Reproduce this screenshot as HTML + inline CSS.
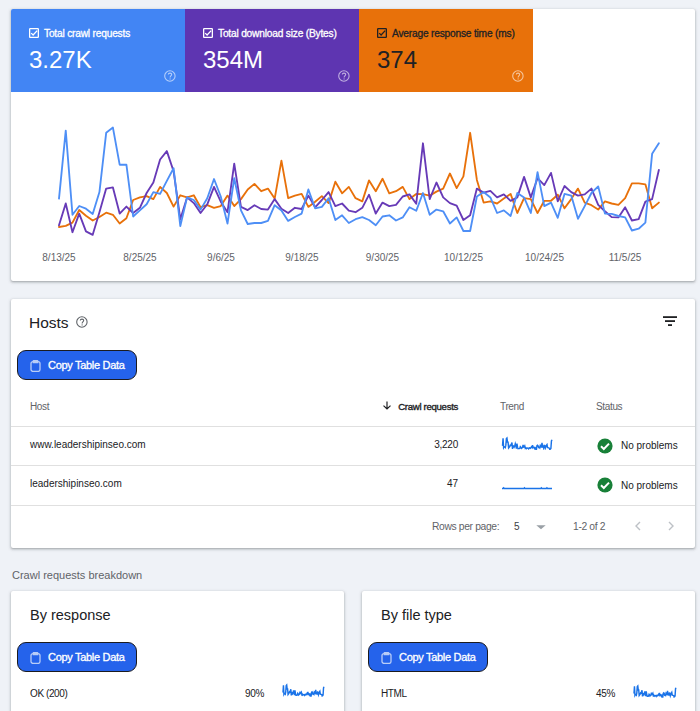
<!DOCTYPE html>
<html><head><meta charset="utf-8"><style>
*{box-sizing:border-box;margin:0;padding:0}
html,body{width:700px;height:711px;overflow:hidden;background:#eff2f7;font-family:"Liberation Sans",sans-serif;color:#202124}
.card{position:absolute;background:#fff;border-radius:2px;box-shadow:0 1px 2px 0 rgba(60,64,67,.3),0 1px 3px 1px rgba(60,64,67,.15);overflow:hidden}
.t{position:absolute;white-space:nowrap;line-height:1}
.tile{position:absolute;top:0;height:83px;width:174px}
.tlabel{position:absolute;left:33px;top:20px;font-size:10.2px;-webkit-text-stroke:0.3px currentColor;letter-spacing:-0.2px;white-space:nowrap;line-height:1}
.tval{position:absolute;left:18px;top:39px;font-size:24px;white-space:nowrap;line-height:1}
.btn{position:absolute;width:120px;height:30px;background:#2563eb;border:1px solid #1b1b1f;border-radius:9px;overflow:hidden}
.btxt{position:absolute;left:30px;top:9px;font-size:11px;-webkit-text-stroke:0.3px #fff;letter-spacing:-0.3px;color:#fff;white-space:nowrap;line-height:1}
.hdr{font-size:10px;letter-spacing:-0.35px;color:#5f6368}
.cell{font-size:10px;color:#202124}
.div{position:absolute;left:0;right:0;height:1px;background:#e0e0e0}
</style></head><body>

<div class="card" style="left:11px;top:9px;width:684px;height:272px">
  <div class="tile" style="left:0;background:#4285f4;color:#fff">
    <svg style="position:absolute;left:18px;top:19px" width="10" height="10" viewBox="0 0 10 10"><rect x="0.65" y="0.65" width="8.7" height="8.7" rx="0.6" fill="none" stroke="#fff" stroke-width="1.3"/><path d="M2.2,5.1 L4.1,7 L8.2,2.6" fill="none" stroke="#fff" stroke-width="1.3"/></svg>
    <span class="tlabel">Total crawl requests</span>
    <span class="tval">3.27K</span>
    <svg style="position:absolute;left:152px;top:60px" width="14" height="14" viewBox="0 0 14 14"><circle cx="6.9" cy="7" r="5.2" fill="none" stroke="#fff" stroke-width="1.1" opacity="0.6"/><path d="M5.3,5.6 C5.3,4.6 6.1,4.1 7,4.1 C7.9,4.1 8.7,4.7 8.7,5.5 C8.7,6.6 7.1,6.8 7.1,8.6" fill="none" stroke="#fff" stroke-width="1.1" opacity="0.6"/><circle cx="7.1" cy="9.9" r="0.6" fill="#fff" opacity="0.6"/></svg>
  </div>
  <div class="tile" style="left:174px;background:#5e35b1;color:#fff">
    <svg style="position:absolute;left:18px;top:19px" width="10" height="10" viewBox="0 0 10 10"><rect x="0.65" y="0.65" width="8.7" height="8.7" rx="0.6" fill="none" stroke="#fff" stroke-width="1.3"/><path d="M2.2,5.1 L4.1,7 L8.2,2.6" fill="none" stroke="#fff" stroke-width="1.3"/></svg>
    <span class="tlabel">Total download size (Bytes)</span>
    <span class="tval">354M</span>
    <svg style="position:absolute;left:152px;top:60px" width="14" height="14" viewBox="0 0 14 14"><circle cx="6.9" cy="7" r="5.2" fill="none" stroke="#fff" stroke-width="1.1" opacity="0.6"/><path d="M5.3,5.6 C5.3,4.6 6.1,4.1 7,4.1 C7.9,4.1 8.7,4.7 8.7,5.5 C8.7,6.6 7.1,6.8 7.1,8.6" fill="none" stroke="#fff" stroke-width="1.1" opacity="0.6"/><circle cx="7.1" cy="9.9" r="0.6" fill="#fff" opacity="0.6"/></svg>
  </div>
  <div class="tile" style="left:348px;background:#e8710a;color:#202124">
    <svg style="position:absolute;left:18px;top:19px" width="10" height="10" viewBox="0 0 10 10"><rect x="0.65" y="0.65" width="8.7" height="8.7" rx="0.6" fill="none" stroke="#202124" stroke-width="1.3"/><path d="M2.2,5.1 L4.1,7 L8.2,2.6" fill="none" stroke="#202124" stroke-width="1.3"/></svg>
    <span class="tlabel">Average response time (ms)</span>
    <span class="tval">374</span>
    <svg style="position:absolute;left:152px;top:60px" width="14" height="14" viewBox="0 0 14 14"><circle cx="6.9" cy="7" r="5.2" fill="none" stroke="#fff" stroke-width="1.1" opacity="0.6"/><path d="M5.3,5.6 C5.3,4.6 6.1,4.1 7,4.1 C7.9,4.1 8.7,4.7 8.7,5.5 C8.7,6.6 7.1,6.8 7.1,8.6" fill="none" stroke="#fff" stroke-width="1.1" opacity="0.6"/><circle cx="7.1" cy="9.9" r="0.6" fill="#fff" opacity="0.6"/></svg>
  </div>
</div>

<svg style="position:absolute;left:0;top:0" width="700" height="290" viewBox="0 0 700 290">
  <g fill="none" stroke-width="1.85" stroke-linejoin="round" stroke-linecap="round">
    <path d="M59.00,227.0 L65.74,225.8 L72.48,222.6 L79.22,210.0 L85.96,215.7 L92.70,220.5 L99.44,217.0 L106.18,212.7 L112.92,214.8 L119.66,223.5 L126.40,218.3 L133.14,200.0 L139.88,197.4 L146.62,196.1 L153.36,199.1 L160.10,186.9 L166.84,193.0 L173.58,206.6 L180.32,195.3 L187.06,197.4 L193.80,195.3 L200.54,207.2 L207.28,205.2 L214.02,207.8 L220.76,206.1 L227.50,195.6 L234.24,206.1 L240.98,199.1 L247.72,189.5 L254.46,183.9 L261.20,191.2 L267.94,188.6 L274.68,198.6 L281.42,160.7 L288.16,198.2 L294.90,195.6 L301.64,193.9 L308.38,206.9 L315.12,201.7 L321.86,196.1 L328.60,203.1 L335.34,181.7 L342.08,193.3 L348.82,186.9 L355.56,198.2 L362.30,201.4 L369.04,180.4 L375.78,191.2 L382.52,178.7 L389.26,193.3 L396.00,191.2 L402.74,186.9 L409.48,199.1 L416.22,193.9 L422.96,194.1 L429.70,195.6 L436.44,191.6 L443.18,188.6 L449.92,173.5 L456.66,188.1 L463.40,176.4 L470.14,132.8 L476.88,179.9 L483.62,202.6 L490.36,201.4 L497.10,203.5 L503.84,198.6 L510.58,193.9 L517.32,213.0 L524.06,198.2 L530.80,199.1 L537.54,213.0 L544.28,200.8 L551.02,200.8 L557.76,194.7 L564.50,208.3 L571.24,199.1 L577.98,188.6 L584.72,202.6 L591.46,205.2 L598.20,209.6 L604.94,201.4 L611.68,203.5 L618.42,204.8 L625.16,198.2 L631.90,183.4 L638.64,183.4 L645.38,184.3 L652.12,208.3 L658.86,202.6" stroke="#e8710a"/>
    <path d="M59.00,225.3 L65.74,203.5 L72.48,232.2 L79.22,213.6 L85.96,231.4 L92.70,234.8 L99.44,212.2 L106.18,188.6 L112.92,187.4 L119.66,213.6 L126.40,206.6 L133.14,213.0 L139.88,207.8 L146.62,193.0 L153.36,182.5 L160.10,159.5 L166.84,151.1 L173.58,171.2 L180.32,219.2 L187.06,197.4 L193.80,203.1 L200.54,213.0 L207.28,204.3 L214.02,186.9 L220.76,201.7 L227.50,212.2 L234.24,163.7 L240.98,206.9 L247.72,210.1 L254.46,205.2 L261.20,209.0 L267.94,209.6 L274.68,199.1 L281.42,208.7 L288.16,213.0 L294.90,207.8 L301.64,209.0 L308.38,195.6 L315.12,207.3 L321.86,200.0 L328.60,192.1 L335.34,206.1 L342.08,203.5 L348.82,210.6 L355.56,212.2 L362.30,207.8 L369.04,194.7 L375.78,213.6 L382.52,202.6 L389.26,206.1 L396.00,204.8 L402.74,196.5 L409.48,194.4 L416.22,203.8 L422.96,143.3 L429.70,199.1 L436.44,182.5 L443.18,197.4 L449.92,203.1 L456.66,205.7 L463.40,220.0 L470.14,215.3 L476.88,188.6 L483.62,192.6 L490.36,190.9 L497.10,197.4 L503.84,194.4 L510.58,200.8 L517.32,197.4 L524.06,176.9 L530.80,197.4 L537.54,178.2 L544.28,185.1 L551.02,172.9 L557.76,201.4 L564.50,186.0 L571.24,192.1 L577.98,195.6 L584.72,194.4 L591.46,188.6 L598.20,204.8 L604.94,211.3 L611.68,217.1 L618.42,217.4 L625.16,207.3 L631.90,220.5 L638.64,219.2 L645.38,201.7 L652.12,199.1 L658.86,170.0" stroke="#673ab7"/>
    <path d="M59.00,198.6 L65.74,130.6 L72.48,214.8 L79.22,206.0 L85.96,208.7 L92.70,213.9 L99.44,192.1 L106.18,132.8 L112.92,127.6 L119.66,164.7 L126.40,164.7 L133.14,216.5 L139.88,210.4 L146.62,204.3 L153.36,192.1 L160.10,193.9 L166.84,180.8 L173.58,168.2 L180.32,226.1 L187.06,197.4 L193.80,200.0 L200.54,209.6 L207.28,198.2 L214.02,179.0 L220.76,196.5 L227.50,223.5 L234.24,178.2 L240.98,210.4 L247.72,224.0 L254.46,223.0 L261.20,223.0 L267.94,220.9 L274.68,205.2 L281.42,210.4 L288.16,220.9 L294.90,217.0 L301.64,213.6 L308.38,189.5 L315.12,208.3 L321.86,206.9 L328.60,198.2 L335.34,220.0 L342.08,215.3 L348.82,223.0 L355.56,219.2 L362.30,217.1 L369.04,220.0 L375.78,225.3 L382.52,216.5 L389.26,215.3 L396.00,220.5 L402.74,217.4 L409.48,207.3 L416.22,210.8 L422.96,193.0 L429.70,214.8 L436.44,209.6 L443.18,211.3 L449.92,223.5 L456.66,217.4 L463.40,231.0 L470.14,231.0 L476.88,196.5 L483.62,192.1 L490.36,197.4 L497.10,213.0 L503.84,210.4 L510.58,216.0 L517.32,193.0 L524.06,197.4 L530.80,213.0 L537.54,172.1 L544.28,206.1 L551.02,202.6 L557.76,217.8 L564.50,193.9 L571.24,195.6 L577.98,218.8 L584.72,206.1 L591.46,193.0 L598.20,186.4 L604.94,213.6 L611.68,213.9 L618.42,216.0 L625.16,217.4 L631.90,230.5 L638.64,228.7 L645.38,222.6 L652.12,153.8 L658.86,143.3" stroke="#4e8ff6"/>
  </g>
</svg>
<div class="t" style="left:0;top:253px;width:700px;height:12px;font-size:10px;color:#5f6368">
  <span class="t" style="left:59px;transform:translateX(-50%)">8/13/25</span>
  <span class="t" style="left:140px;transform:translateX(-50%)">8/25/25</span>
  <span class="t" style="left:221px;transform:translateX(-50%)">9/6/25</span>
  <span class="t" style="left:302px;transform:translateX(-50%)">9/18/25</span>
  <span class="t" style="left:382.5px;transform:translateX(-50%)">9/30/25</span>
  <span class="t" style="left:463.5px;transform:translateX(-50%)">10/12/25</span>
  <span class="t" style="left:544.5px;transform:translateX(-50%)">10/24/25</span>
  <span class="t" style="left:625px;transform:translateX(-50%)">11/5/25</span>
</div>

<div class="card" style="left:11px;top:299px;width:684px;height:249px">
  <span class="t" style="left:18px;top:16px;font-size:15.5px">Hosts</span>
  <svg style="position:absolute;left:64px;top:16px" width="14" height="14" viewBox="0 0 14 14"><circle cx="6.9" cy="7" r="5.2" fill="none" stroke="#5f6368" stroke-width="1.1" opacity="1"/><path d="M5.3,5.6 C5.3,4.6 6.1,4.1 7,4.1 C7.9,4.1 8.7,4.7 8.7,5.5 C8.7,6.6 7.1,6.8 7.1,8.6" fill="none" stroke="#5f6368" stroke-width="1.1" opacity="1"/><circle cx="7.1" cy="9.9" r="0.6" fill="#5f6368" opacity="1"/></svg>
  <svg style="position:absolute;left:650px;top:15px" width="16" height="14" viewBox="0 0 16 14"><rect x="2" y="2.2" width="14" height="1.8" fill="#202124"/><rect x="4" y="6.2" width="10" height="1.8" fill="#202124"/><rect x="7" y="10.2" width="4" height="1.8" fill="#202124"/></svg>
  <div class="btn" style="left:6px;top:51px"><svg style="position:absolute;left:12px;top:9px" width="11" height="12" viewBox="0 0 11 12"><rect x="1" y="1.6" width="9" height="9.8" rx="2" fill="none" stroke="#b9cdf7" stroke-width="1.3"/><path d="M3.2,1.6 L3.2,0.9 Q3.2,0.6 3.5,0.6 L7.5,0.6 Q7.8,0.6 7.8,0.9 L7.8,2.6 L3.2,2.6 Z" fill="none" stroke="#b9cdf7" stroke-width="1.1"/></svg><span class="btxt">Copy Table Data</span></div>
  <span class="t hdr" style="left:19px;top:103px">Host</span>
  <svg style="position:absolute;left:371px;top:102px" width="10" height="9" viewBox="0 0 10 9"><path d="M5,0.5 L5,8 M1.5,4.6 L5,8 L8.5,4.6" fill="none" stroke="#202124" stroke-width="1.2"/></svg>
  <span class="t" style="right:237px;top:103px;font-size:9.6px;-webkit-text-stroke:0.35px #202124;letter-spacing:-0.3px;color:#202124">Crawl requests</span>
  <span class="t hdr" style="left:489px;top:103px">Trend</span>
  <span class="t hdr" style="left:585px;top:103px">Status</span>
  <div class="div" style="top:127px"></div>
  <span class="t cell" style="left:19px;top:141px">www.leadershipinseo.com</span>
  <span class="t cell" style="right:237px;top:141px;letter-spacing:-0.25px">3,220</span>
  <svg style="position:absolute;left:490px;top:137px" width="52" height="14" viewBox="490 137 52 14"><path d="M491.50,146.90 L492.06,139.33 L492.61,148.70 L493.17,147.72 L493.72,148.02 L494.28,148.60 L494.84,146.17 L495.39,139.58 L495.95,139.00 L496.51,143.13 L497.06,143.13 L497.62,148.89 L498.17,148.21 L498.73,147.53 L499.29,146.17 L499.84,146.37 L500.40,144.92 L500.96,143.52 L501.51,149.96 L502.07,146.76 L502.62,147.05 L503.18,148.12 L503.74,146.85 L504.29,144.72 L504.85,146.66 L505.40,149.67 L505.96,144.63 L506.52,148.21 L507.07,149.72 L507.63,149.61 L508.19,149.61 L508.74,149.38 L509.30,147.63 L509.85,148.21 L510.41,149.38 L510.97,148.94 L511.52,148.56 L512.08,145.88 L512.63,147.98 L513.19,147.82 L513.75,146.85 L514.30,149.28 L514.86,148.75 L515.42,149.61 L515.97,149.19 L516.53,148.95 L517.08,149.28 L517.64,149.87 L518.20,148.89 L518.75,148.75 L519.31,149.33 L519.87,148.99 L520.42,147.86 L520.98,148.25 L521.53,146.27 L522.09,148.70 L522.65,148.12 L523.20,148.31 L523.76,149.67 L524.31,148.99 L524.87,150.50 L525.43,150.50 L525.98,146.66 L526.54,146.17 L527.10,146.76 L527.65,148.50 L528.21,148.21 L528.76,148.83 L529.32,146.27 L529.88,146.76 L530.43,148.50 L530.99,143.95 L531.54,147.73 L532.10,147.34 L532.66,149.03 L533.21,146.37 L533.77,146.56 L534.33,149.14 L534.88,147.73 L535.44,146.27 L535.99,145.54 L536.55,148.56 L537.11,148.60 L537.66,148.83 L538.22,148.99 L538.78,150.44 L539.33,150.24 L539.89,149.57 L540.44,141.91 L541.00,140.75" fill="none" stroke="#1a73e8" stroke-width="1.45"/></svg>
  <svg style="position:absolute;left:586px;top:138.5px" width="16" height="16" viewBox="0 0 16 16"><circle cx="8" cy="8" r="7.6" fill="#188038"/><path d="M4,8.3 L6.8,11 L12,5.6" fill="none" stroke="#fff" stroke-width="2"/></svg>
  <span class="t cell" style="left:610px;top:142px">No problems</span>
  <div class="div" style="top:166px"></div>
  <span class="t cell" style="left:19px;top:180px">leadershipinseo.com</span>
  <span class="t cell" style="right:237px;top:180px">47</span>
  <svg style="position:absolute;left:490px;top:180px" width="52" height="12" viewBox="490 180 52 12"><path d="M491.00,189.50 L491.56,189.50 L492.12,189.50 L492.69,188.80 L493.25,189.50 L493.81,189.50 L494.37,189.50 L494.93,189.50 L495.49,189.50 L496.06,189.50 L496.62,189.50 L497.18,189.50 L497.74,189.50 L498.30,189.50 L498.87,189.50 L499.43,189.50 L499.99,189.50 L500.55,189.50 L501.11,189.50 L501.67,189.50 L502.24,189.50 L502.80,189.50 L503.36,189.50 L503.92,189.50 L504.48,189.50 L505.04,189.50 L505.61,189.50 L506.17,189.50 L506.73,189.50 L507.29,189.50 L507.85,189.50 L508.42,189.50 L508.98,189.50 L509.54,189.50 L510.10,189.50 L510.66,189.50 L511.22,189.50 L511.79,189.50 L512.35,189.50 L512.91,189.50 L513.47,188.80 L514.03,189.50 L514.60,189.50 L515.16,189.50 L515.72,189.50 L516.28,189.50 L516.84,189.50 L517.40,189.50 L517.97,189.50 L518.53,189.50 L519.09,189.50 L519.65,189.50 L520.21,189.50 L520.78,189.50 L521.34,189.50 L521.90,189.50 L522.46,189.50 L523.02,189.50 L523.58,189.50 L524.15,189.50 L524.71,189.50 L525.27,189.50 L525.83,189.50 L526.39,189.50 L526.96,189.50 L527.52,189.50 L528.08,189.50 L528.64,189.50 L529.20,189.50 L529.76,189.50 L530.33,188.80 L530.89,189.50 L531.45,189.50 L532.01,189.50 L532.57,189.50 L533.13,189.50 L533.70,189.50 L534.26,189.50 L534.82,189.50 L535.38,189.50 L535.94,188.80 L536.51,189.50 L537.07,189.50 L537.63,189.50 L538.19,189.50 L538.75,189.50 L539.31,189.50 L539.88,189.50 L540.44,189.50 L541.00,189.50" fill="none" stroke="#1a73e8" stroke-width="1.45"/></svg>
  <svg style="position:absolute;left:586px;top:178px" width="16" height="16" viewBox="0 0 16 16"><circle cx="8" cy="8" r="7.6" fill="#188038"/><path d="M4,8.3 L6.8,11 L12,5.6" fill="none" stroke="#fff" stroke-width="2"/></svg>
  <span class="t cell" style="left:610px;top:182px">No problems</span>
  <div class="div" style="top:206px"></div>
  <span class="t hdr" style="left:421px;top:223px;font-size:10.3px">Rows per page:</span>
  <span class="t" style="left:503px;top:223px;font-size:10px;color:#3c4043">5</span>
  <svg style="position:absolute;left:525px;top:226px" width="10" height="5" viewBox="0 0 10 5"><path d="M0.3,0.2 L9.7,0.2 L5,4.3 Z" fill="#9aa0a6"/></svg>
  <span class="t hdr" style="left:562px;top:223px;font-size:10.3px;color:#5f6368">1-2 of 2</span>
  <svg style="position:absolute;left:623px;top:222px" width="8" height="10" viewBox="0 0 8 10"><path d="M6,1 L2,5 L6,9" fill="none" stroke="#bdc1c6" stroke-width="1.4"/></svg>
  <svg style="position:absolute;left:656px;top:222px" width="8" height="10" viewBox="0 0 8 10"><path d="M2,1 L6,5 L2,9" fill="none" stroke="#bdc1c6" stroke-width="1.4"/></svg>
</div>

<span class="t" style="left:12px;top:570px;font-size:11px;color:#5f6368">Crawl requests breakdown</span>

<div class="card" style="left:11px;top:591px;width:333px;height:140px">
  <span class="t" style="left:19px;top:17px;font-size:14.5px">By response</span>
  <div class="btn" style="left:6px;top:51px"><svg style="position:absolute;left:12px;top:9px" width="11" height="12" viewBox="0 0 11 12"><rect x="1" y="1.6" width="9" height="9.8" rx="2" fill="none" stroke="#b9cdf7" stroke-width="1.3"/><path d="M3.2,1.6 L3.2,0.9 Q3.2,0.6 3.5,0.6 L7.5,0.6 Q7.8,0.6 7.8,0.9 L7.8,2.6 L3.2,2.6 Z" fill="none" stroke="#b9cdf7" stroke-width="1.1"/></svg><span class="btxt">Copy Table Data</span></div>
  <span class="t" style="left:19px;top:98px;font-size:10px;letter-spacing:-0.4px">OK (200)</span>
  <span class="t" style="left:234px;top:98px;font-size:10px;letter-spacing:-0.35px">90%</span>
  <svg style="position:absolute;left:270px;top:92px" width="45" height="16" viewBox="270 92 45 16"><path d="M272.00,101.55 L272.46,94.32 L272.92,103.28 L273.38,102.34 L273.84,102.63 L274.30,103.18 L274.76,100.86 L275.22,94.55 L275.69,94.00 L276.15,97.95 L276.61,97.95 L277.07,103.46 L277.53,102.81 L277.99,102.16 L278.45,100.86 L278.91,101.05 L279.37,99.66 L279.83,98.32 L280.29,104.48 L280.75,101.43 L281.21,101.70 L281.67,102.72 L282.13,101.51 L282.60,99.47 L283.06,101.33 L283.52,104.20 L283.98,99.38 L284.44,102.81 L284.90,104.26 L285.36,104.15 L285.82,104.15 L286.28,103.93 L286.74,102.26 L287.20,102.81 L287.66,103.93 L288.12,103.51 L288.58,103.15 L289.04,100.59 L289.51,102.59 L289.97,102.44 L290.43,101.51 L290.89,103.83 L291.35,103.33 L291.81,104.15 L292.27,103.74 L292.73,103.52 L293.19,103.83 L293.65,104.39 L294.11,103.46 L294.57,103.33 L295.03,103.88 L295.49,103.55 L295.96,102.48 L296.42,102.85 L296.88,100.96 L297.34,103.28 L297.80,102.72 L298.26,102.90 L298.72,104.20 L299.18,103.55 L299.64,105.00 L300.10,105.00 L300.56,101.33 L301.02,100.86 L301.48,101.43 L301.94,103.09 L302.40,102.81 L302.87,103.40 L303.33,100.96 L303.79,101.43 L304.25,103.09 L304.71,98.73 L305.17,102.35 L305.63,101.98 L306.09,103.60 L306.55,101.05 L307.01,101.23 L307.47,103.70 L307.93,102.35 L308.39,100.96 L308.85,100.26 L309.31,103.15 L309.78,103.18 L310.24,103.40 L310.70,103.55 L311.16,104.95 L311.62,104.76 L312.08,104.11 L312.54,96.79 L313.00,95.67" fill="none" stroke="#1a73e8" stroke-width="1.45"/></svg>
</div>

<div class="card" style="left:362px;top:591px;width:333px;height:140px">
  <span class="t" style="left:19px;top:17px;font-size:14.5px">By file type</span>
  <div class="btn" style="left:6px;top:51px"><svg style="position:absolute;left:12px;top:9px" width="11" height="12" viewBox="0 0 11 12"><rect x="1" y="1.6" width="9" height="9.8" rx="2" fill="none" stroke="#b9cdf7" stroke-width="1.3"/><path d="M3.2,1.6 L3.2,0.9 Q3.2,0.6 3.5,0.6 L7.5,0.6 Q7.8,0.6 7.8,0.9 L7.8,2.6 L3.2,2.6 Z" fill="none" stroke="#b9cdf7" stroke-width="1.1"/></svg><span class="btxt">Copy Table Data</span></div>
  <span class="t" style="left:19px;top:98px;font-size:10px;letter-spacing:-0.4px">HTML</span>
  <span class="t" style="left:234px;top:98px;font-size:10px;letter-spacing:-0.35px">45%</span>
  <svg style="position:absolute;left:270px;top:92px" width="45" height="16" viewBox="270 92 45 16"><path d="M272.00,102.55 L272.47,95.32 L272.94,104.28 L273.42,103.34 L273.89,103.63 L274.36,104.18 L274.83,101.86 L275.30,95.55 L275.78,95.00 L276.25,98.95 L276.72,98.95 L277.19,104.46 L277.66,103.81 L278.13,103.16 L278.61,101.86 L279.08,102.05 L279.55,100.66 L280.02,99.32 L280.49,105.48 L280.97,102.43 L281.44,102.70 L281.91,103.72 L282.38,102.51 L282.85,100.47 L283.33,102.33 L283.80,105.20 L284.27,100.38 L284.74,103.81 L285.21,105.26 L285.69,105.15 L286.16,105.15 L286.63,104.93 L287.10,103.26 L287.57,103.81 L288.04,104.93 L288.52,104.51 L288.99,104.15 L289.46,101.59 L289.93,103.59 L290.40,103.44 L290.88,102.51 L291.35,104.83 L291.82,104.33 L292.29,105.15 L292.76,104.74 L293.24,104.52 L293.71,104.83 L294.18,105.39 L294.65,104.46 L295.12,104.33 L295.60,104.88 L296.07,104.55 L296.54,103.48 L297.01,103.85 L297.48,101.96 L297.96,104.28 L298.43,103.72 L298.90,103.90 L299.37,105.20 L299.84,104.55 L300.31,106.00 L300.79,106.00 L301.26,102.33 L301.73,101.86 L302.20,102.43 L302.67,104.09 L303.15,103.81 L303.62,104.40 L304.09,101.96 L304.56,102.43 L305.03,104.09 L305.51,99.73 L305.98,103.35 L306.45,102.98 L306.92,104.60 L307.39,102.05 L307.87,102.23 L308.34,104.70 L308.81,103.35 L309.28,101.96 L309.75,101.26 L310.22,104.15 L310.70,104.18 L311.17,104.40 L311.64,104.55 L312.11,105.95 L312.58,105.76 L313.06,105.11 L313.53,97.79 L314.00,96.67" fill="none" stroke="#1a73e8" stroke-width="1.45"/></svg>
</div>

</body></html>
